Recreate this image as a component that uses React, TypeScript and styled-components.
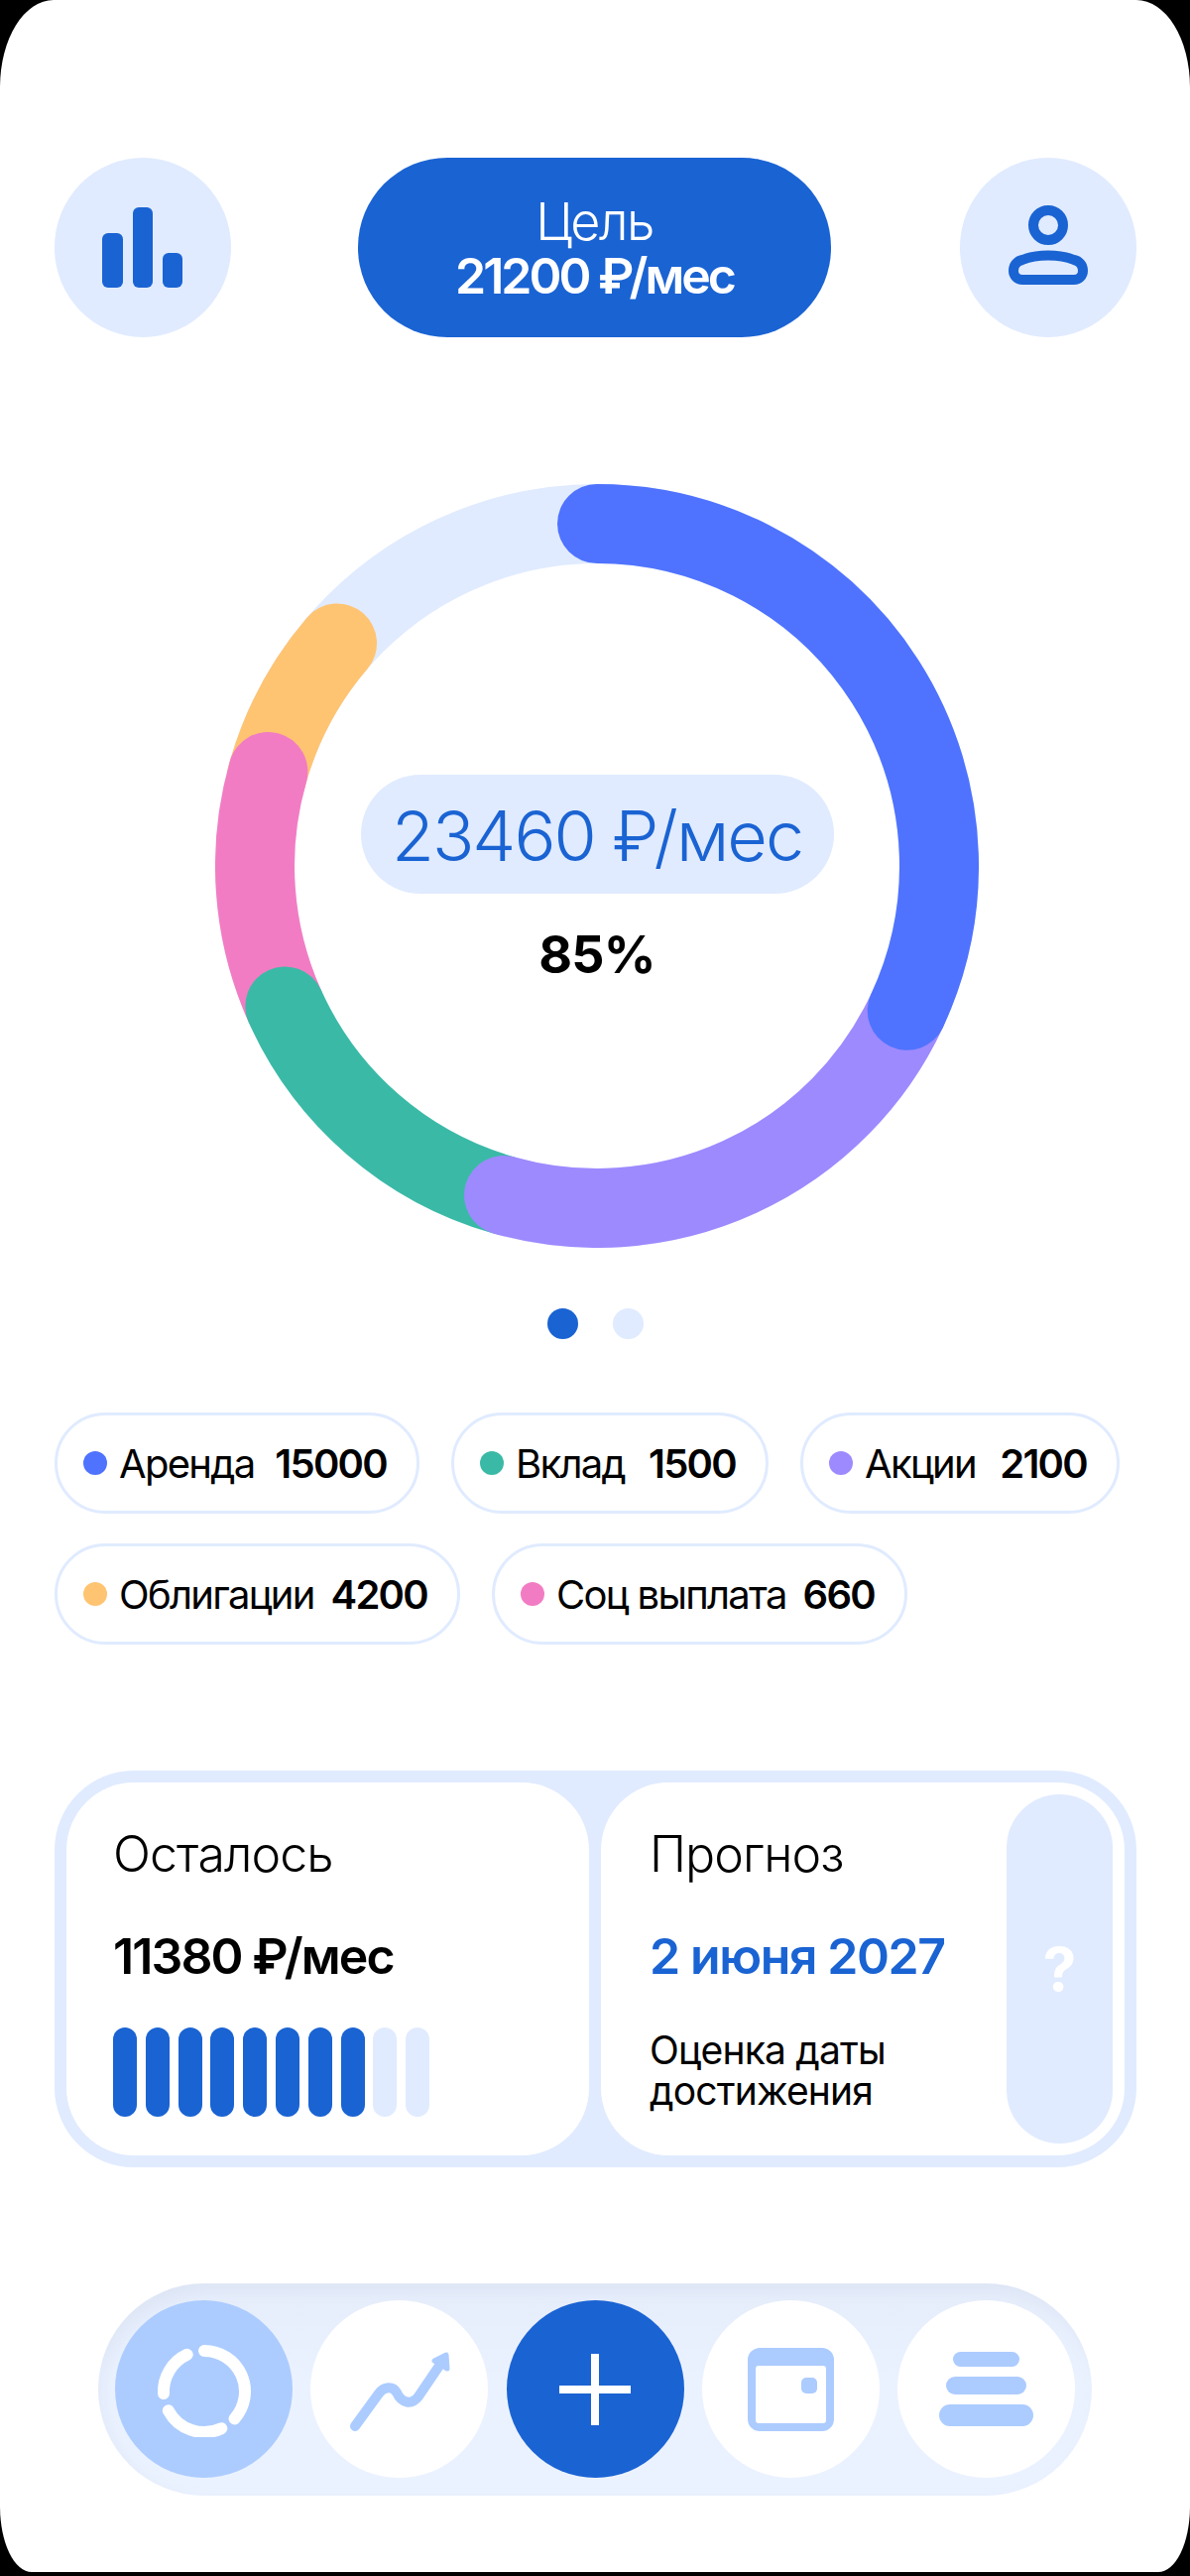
import React from "react";
import styled, { createGlobalStyle } from "styled-components";

const Global = createGlobalStyle`
  html, body { margin: 0; padding: 0; background: #000; }
  #root { width: 1200px; height: 2597px; }
`;
const FONT = `Inter, "Noto Sans", sans-serif`;
const BLUE = "#1A63D3";
const PALE = "#E0EBFF";
const ICON = "#ACCCFF";

const Screen = styled.main`
  box-sizing: border-box;
  width: 1200px;
  height: 2593px;
  background: #fff;
  border-radius: 54px 54px 32px 32px / 88px 88px 66px 66px;
  padding: 159px 54px 0 55px;
  font-family: ${FONT};
  color: #000;
  display: flex;
  flex-direction: column;
`;
const Header = styled.header`
  display: flex;
  justify-content: space-between;
  align-items: center;
`;
const RoundButton = styled.div`
  width: 178px;
  height: 181px;
  border-radius: 50%;
  background: ${PALE};
  display: flex;
  align-items: center;
  justify-content: center;
`;
const GoalPill = styled.div`
  box-sizing: border-box;
  width: 477px;
  height: 181px;
  margin-left: -2px;
  padding-top: 2px;
  border-radius: 90px;
  background: ${BLUE};
  color: #fff;
  display: flex;
  flex-direction: column;
  align-items: center;
  justify-content: center;
`;
const GoalLabel = styled.span`
  font-size: 52px;
  font-weight: 300;
  line-height: 54px;
  letter-spacing: -1.5px;
`;
const GoalValue = styled.span`
  font-size: 50px;
  font-weight: 600;
  line-height: 54px;
  letter-spacing: -3px;
`;
const DonutWrap = styled.section`
  position: relative;
  width: 770px;
  height: 770px;
  margin: 148px 0 0 162px;
`;
const DonutSvg = styled.svg`
  display: block;
`;
const DonutCenter = styled.div`
  position: absolute;
  top: 293px;
  left: 0;
  right: 0;
  display: flex;
  flex-direction: column;
  align-items: center;
`;
const TotalPill = styled.div`
  box-sizing: border-box;
  width: 477px;
  height: 120px;
  padding-top: 3px;
  border-radius: 60px;
  background: ${PALE};
  color: ${BLUE};
  display: flex;
  align-items: center;
  justify-content: center;
  font-size: 70px;
  font-weight: 300;
  letter-spacing: -2px;
`;
const Percent = styled.div`
  margin-top: 32px;
  font-size: 52px;
  font-weight: 700;
  line-height: 60px;
  letter-spacing: -0.8px;
`;
const Pager = styled.div`
  display: flex;
  justify-content: center;
  gap: 35px;
  margin: 61px 0 0;
`;
const PagerDot = styled.span<{ $on?: boolean }>`
  width: 31px;
  height: 31px;
  border-radius: 50%;
  background: ${(p) => (p.$on ? BLUE : PALE)};
`;
const Chips = styled.div`
  display: flex;
  flex-wrap: wrap;
  gap: 30px 32px;
  margin-top: 74px;
`;
const Chip = styled.div<{ $w: number }>`
  box-sizing: border-box;
  width: ${(p) => p.$w}px;
  height: 102px;
  padding: 0 30px 0 26px;
  border: 3px solid ${PALE};
  border-radius: 51px;
  display: flex;
  align-items: center;
  font-size: 40px;
  letter-spacing: -1.7px;
  white-space: nowrap;
`;
const ChipDot = styled.span<{ $c: string }>`
  flex: none;
  width: 24px;
  height: 24px;
  border-radius: 50%;
  background: ${(p) => p.$c};
  margin-right: 12px;
`;
const ChipName = styled.span`
  font-weight: 400;
`;
const ChipValue = styled.span`
  margin-left: auto;
  font-weight: 600;
`;
const Panel = styled.section`
  box-sizing: border-box;
  height: 400px;
  margin-top: 127px;
  padding: 12px;
  background: ${PALE};
  border-radius: 80px;
  display: grid;
  grid-template-columns: 527px 528px;
  gap: 12px;
`;
const Card = styled.div<{ $left: number }>`
  position: relative;
  box-sizing: border-box;
  background: #fff;
  border-radius: 68px;
  padding: 42px 0 0 ${(p) => p.$left}px;
`;
const CardTitle = styled.div`
  font-size: 50px;
  font-weight: 300;
  line-height: 60px;
  letter-spacing: -0.9px;
`;
const CardValue = styled.div<{ $blue?: boolean }>`
  margin-top: 43px;
  font-size: 50px;
  font-weight: 600;
  line-height: 60px;
  letter-spacing: ${(p) => (p.$blue ? "-1.4px" : "-1.9px")};
  color: ${(p) => (p.$blue ? BLUE : "#000")};
`;
const Bars = styled.div`
  display: flex;
  gap: 8.8px;
  margin-top: 42px;
`;
const Bar = styled.span<{ $on?: boolean }>`
  width: 24px;
  height: 90px;
  border-radius: 12px;
  background: ${(p) => (p.$on ? BLUE : PALE)};
`;
const Note = styled.div`
  margin-top: 44px;
  font-size: 39px;
  font-weight: 400;
  line-height: 41px;
  letter-spacing: -0.8px;
`;
const HelpPill = styled.div`
  position: absolute;
  top: 12px;
  right: 12px;
  width: 107px;
  height: 352px;
  border-radius: 54px;
  background: ${PALE};
  color: #fff;
  display: flex;
  align-items: center;
  justify-content: center;
  font-size: 60px;
  font-weight: 700;
`;
const Nav = styled.nav`
  box-sizing: border-box;
  width: 1002px;
  height: 214px;
  margin: 117px 0 0 44px;
  padding: 17px;
  border-radius: 107px;
  background: linear-gradient(180deg, #E5ECFA 0%, #EBF2FF 45%);
  box-shadow: inset 6px 6px 16px rgba(150, 165, 200, 0.1);
  display: flex;
  justify-content: space-between;
`;
const NavButton = styled.div<{ $bg: string }>`
  width: 179px;
  height: 179px;
  border-radius: 50%;
  background: ${(p) => p.$bg};
  display: flex;
  align-items: center;
  justify-content: center;
`;

const R = 345;
const C = 385;
const pt = (a: number) => {
  const t = ((a - 90) * Math.PI) / 180;
  return [C + R * Math.cos(t), C + R * Math.sin(t)];
};
const arc = (a: number, b: number) => {
  const [x0, y0] = pt(a);
  const [x1, y1] = pt(b);
  return `M${x0} ${y0}A${R} ${R} 0 ${b - a > 180 ? 1 : 0} 1 ${x1} ${y1}`;
};
const SEGMENTS = [
  { c: "#FFC472", a: 285, b: 310.6 },
  { c: "#F27CC3", a: 246, b: 286 },
  { c: "#3ABAA6", a: 196, b: 245.8 },
  { c: "#9D8AFF", a: 115, b: 195.8 },
  { c: "#4F73FF", a: 0, b: 115 },
];
const CHIPS = [
  { c: "#4F73FF", n: "Аренда", v: "15000", w: 368 },
  { c: "#3ABAA6", n: "Вклад", v: "1500", w: 320 },
  { c: "#9D8AFF", n: "Акции", v: "2100", w: 322 },
  { c: "#FFC472", n: "Облигации", v: "4200", w: 409 },
  { c: "#F27CC3", n: "Соц выплата", v: "660", w: 419 },
];

export default function App() {
  return (
    <>
      <Global />
      <Screen>
        <Header>
          <RoundButton>
            <svg width="82" height="82" viewBox="0 0 82 82" fill={BLUE}>
              <rect x="0" y="26" width="21" height="55" rx="6" />
              <rect x="31" y="0" width="20" height="81" rx="6" />
              <rect x="61" y="46" width="20" height="35" rx="6" />
            </svg>
          </RoundButton>
          <GoalPill>
            <GoalLabel>Цель</GoalLabel>
            <GoalValue>21200 ₽/мес</GoalValue>
          </GoalPill>
          <RoundButton>
            <svg width="80" height="85" viewBox="0 0 80 85" fill="none" stroke={BLUE} strokeWidth="10">
              <circle cx="40" cy="20" r="15" />
              <path d="M14 75H66C71 75 75 71 75 66C75 60 71 56 66 55C52 49 28 49 14 55C9 56 5 60 5 66C5 71 9 75 14 75Z" strokeLinejoin="round" />
            </svg>
          </RoundButton>
        </Header>

        <DonutWrap>
          <DonutSvg width="770" height="770" viewBox="0 0 770 770" fill="none">
            <circle cx={C} cy={C} r={R} stroke={PALE} strokeWidth="80" />
            {SEGMENTS.map((s) => (
              <path key={s.c} d={arc(s.a, s.b)} stroke={s.c} strokeWidth="80" strokeLinecap="round" />
            ))}
          </DonutSvg>
          <DonutCenter>
            <TotalPill>23460 ₽/мес</TotalPill>
            <Percent>85%</Percent>
          </DonutCenter>
        </DonutWrap>

        <Pager>
          <PagerDot $on />
          <PagerDot />
        </Pager>

        <Chips>
          {CHIPS.map((c) => (
            <Chip key={c.n} $w={c.w}>
              <ChipDot $c={c.c} />
              <ChipName>{c.n}</ChipName>
              <ChipValue>{c.v}</ChipValue>
            </Chip>
          ))}
        </Chips>

        <Panel>
          <Card $left={47}>
            <CardTitle>Осталось</CardTitle>
            <CardValue>11380 ₽/мес</CardValue>
            <Bars>
              {Array.from({ length: 10 }, (_, i) => (
                <Bar key={i} $on={i < 8} />
              ))}
            </Bars>
          </Card>
          <Card $left={49}>
            <CardTitle>Прогноз</CardTitle>
            <CardValue $blue>2 июня 2027</CardValue>
            <Note>
              Оценка даты
              <br />
              достижения
            </Note>
            <HelpPill>?</HelpPill>
          </Card>
        </Panel>

        <Nav>
          <NavButton $bg={ICON}>
            <svg width="96" height="96" viewBox="0 -2 96 96" fill="none" stroke="#fff" strokeWidth="12" strokeLinecap="round">
              <path d="M48 7A41 41 0 0 1 78.5 75.4" />
              <path d="M65.3 85.2A41 41 0 0 1 11.8 67.2" />
              <path d="M7 50A41 41 0 0 1 30.7 10.8" />
            </svg>
          </NavButton>
          <NavButton $bg="#fff">
            <svg width="104" height="86" viewBox="0 -4 104 86" fill="none" stroke={ICON} strokeWidth="10" strokeLinecap="round" strokeLinejoin="round">
              <path d="M7 76L31 43C36 36 45 35 49 42C54 53 64 55 71 46L92 15" />
              <path d="M87 10L99 4L100 18Z" fill={ICON} strokeWidth="5" />
            </svg>
          </NavButton>
          <NavButton $bg={BLUE}>
            <svg width="72" height="72" viewBox="0 0 72 72" fill="#fff">
              <rect x="32" y="0" width="8" height="72" />
              <rect x="0" y="32" width="72" height="8" />
            </svg>
          </NavButton>
          <NavButton $bg="#fff">
            <svg width="87" height="84" viewBox="0 0 87 84" fill={ICON}>
              <path fillRule="evenodd" d="M12 0H75A12 12 0 0 1 87 12V72A12 12 0 0 1 75 84H12A12 12 0 0 1 0 72V12A12 12 0 0 1 12 0ZM11 18A3 3 0 0 0 8 21V73A3 3 0 0 0 11 76H76A3 3 0 0 0 79 73V21A3 3 0 0 0 76 18Z" />
              <rect x="54" y="30" width="16" height="16" rx="5" />
            </svg>
          </NavButton>
          <NavButton $bg="#fff">
            <svg width="95" height="75" viewBox="0 0 95 75" fill={ICON}>
              <rect x="14" y="0" width="67" height="15" rx="7.5" />
              <rect x="7" y="25" width="81" height="18" rx="9" />
              <rect x="0" y="53" width="95" height="22" rx="11" />
            </svg>
          </NavButton>
        </Nav>
      </Screen>
    </>
  );
}
